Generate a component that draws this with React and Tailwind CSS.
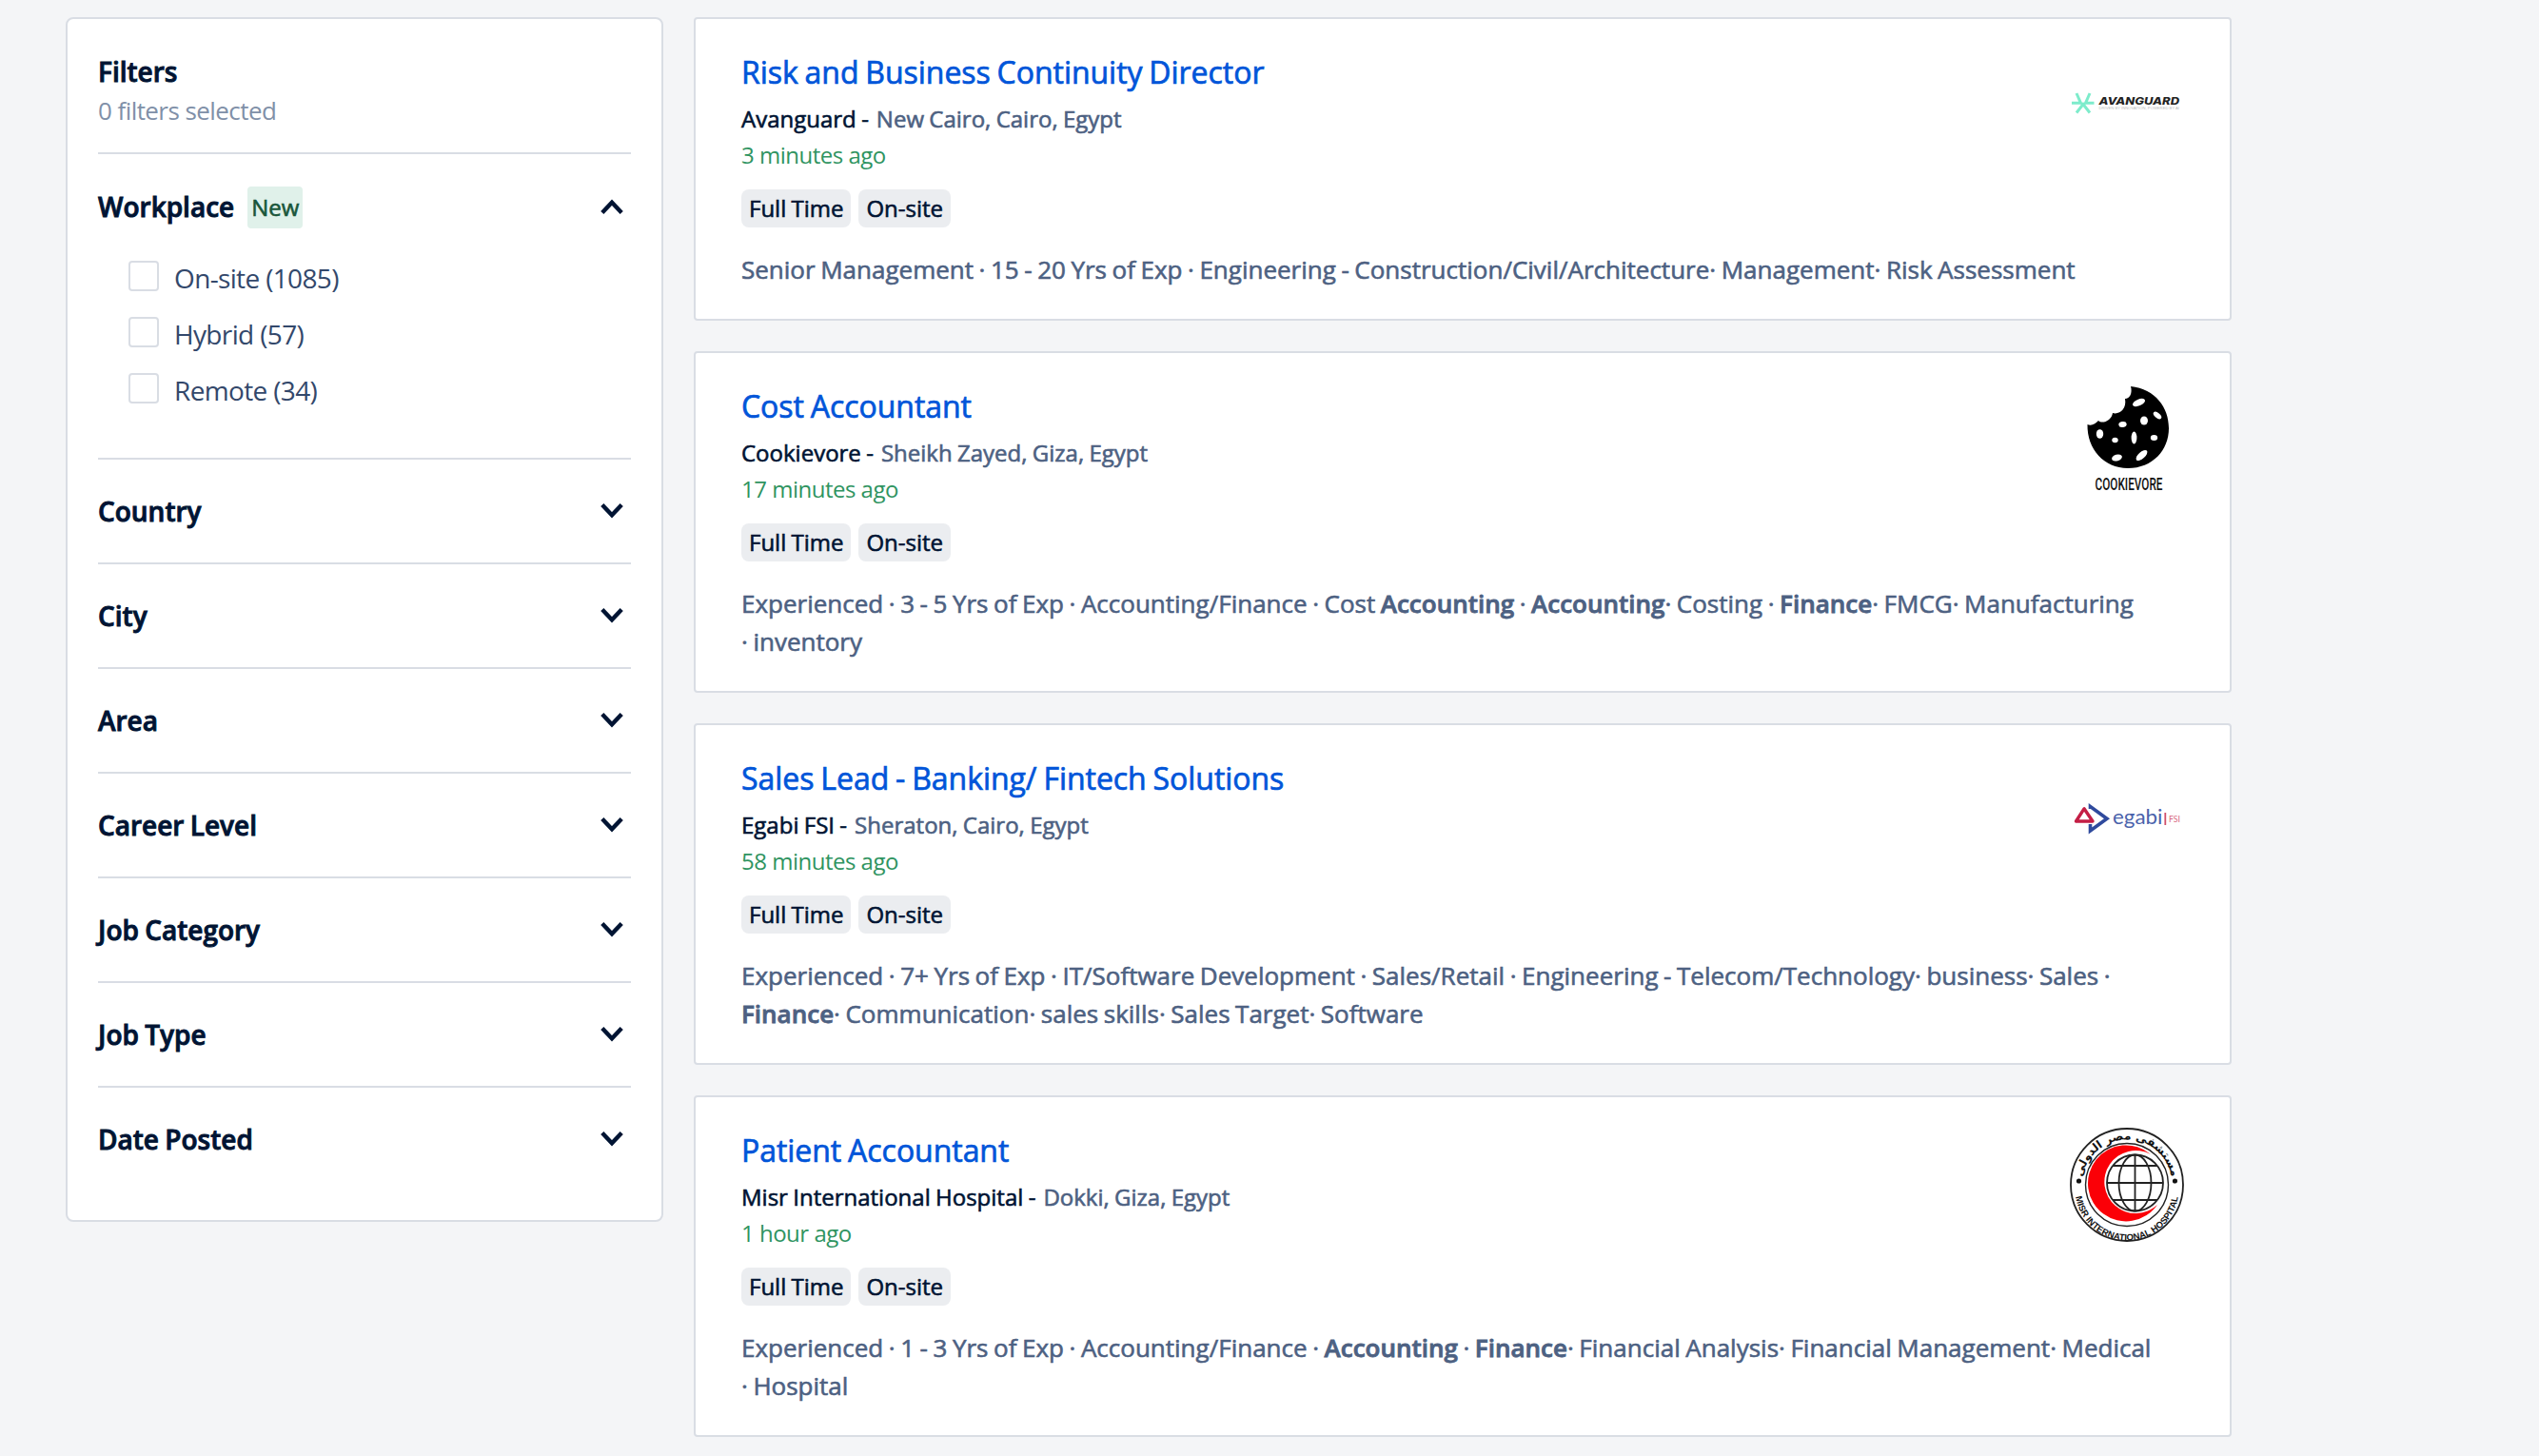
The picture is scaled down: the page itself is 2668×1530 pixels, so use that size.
import React from "react";

const filters = ["Country", "City", "Area", "Career Level", "Job Category", "Job Type", "Date Posted"];
const workplaces = ["On-site (1085)", "Hybrid (57)", "Remote (34)"];

function Chevron({ up }) {
  return (
    <svg width="24" height="20" viewBox="0 0 24 20" fill="none" stroke="#001433" strokeWidth="4.4">
      <path d={up ? "M1.8 15.500 L12 4.700 L22.2 15.500" : "M1.8 3.500 L12 14.300 L22.2 3.500"} />
    </svg>
  );
}

function AvanguardLogo() {
  return (
    <svg width="120" height="120" viewBox="0 0 120 120">
      <g stroke="#7deccb" strokeWidth="3" fill="none">
        <path d="M2 56.300H11.5L7 46M25.500 56.300H16.500L21 46M7 66.500L14 57.500L21 66.500" />
      </g>
      <text x="30.500" y="57.500" fontFamily="Inter" fontWeight="800" fontStyle="italic" fontSize="10.500" textLength="84.500" lengthAdjust="spacingAndGlyphs" fill="#222">AVANGUARD</text>
      <text x="30.500" y="63" fontFamily="Liberation Sans" fontSize="3.800" textLength="84.500" lengthAdjust="spacingAndGlyphs" fill="#bbb">DRIVEN BY INNOVATION, POWERED BY AI</text>
    </svg>
  );
}

function CookievoreLogo() {
  return (
    <svg className="overflow-visible" width="120" height="120" viewBox="-10 -3 120 120">
      <path d="M54 0C80 3 94 22 94 44C94 67 77 86 51 86C26 86 8 66 8.500 40C13 42 17 39 20 36C24 40 34 36 35 28C42 30 50 24 48 13C53 13 56 7 54 0Z" fill="#000" />
      <g fill="#fff">
        <ellipse cx="62.500" cy="17" rx="7" ry="3.400" transform="rotate(-24 62.500 17)" />
        <ellipse cx="82" cy="30.500" rx="5" ry="2.700" transform="rotate(40 82 30.500)" />
        <ellipse cx="68" cy="36" rx="4" ry="4.600" />
        <ellipse cx="45.500" cy="40" rx="4.200" ry="3" transform="rotate(-10 45.500 40)" />
        <ellipse cx="21.500" cy="50" rx="3.700" ry="4.800" />
        <ellipse cx="37.500" cy="56.500" rx="3.200" ry="2.700" />
        <ellipse cx="57.500" cy="54" rx="2.900" ry="6.500" />
        <ellipse cx="78.500" cy="54" rx="3.700" ry="2.900" />
        <ellipse cx="39.500" cy="75" rx="5.500" ry="3.400" transform="rotate(-15 39.500 75)" />
        <ellipse cx="65.500" cy="72.500" rx="7.300" ry="3.500" transform="rotate(-42 65.500 72.500)" />
      </g>
      <text x="16.500" y="109" fontFamily="Roboto" fontWeight="500" fontSize="18.500" textLength="71" lengthAdjust="spacingAndGlyphs" fill="#111">COOKIEVORE</text>
    </svg>
  );
}

function EgabiLogo() {
  return (
    <svg width="120" height="120" viewBox="0 0 120 120" fill="none">
      <path d="M21.500 56V53.500L39 66.300L21.500 79V72" stroke="#2f4a9d" strokeWidth="3.600" />
      <path d="M15 55.800L6.500 69H24Z" stroke="#c41e45" strokeWidth="3.400" strokeLinejoin="round" />
      <text x="45" y="71.500" fontFamily="Lato" fontSize="21" textLength="52.500" lengthAdjust="spacingAndGlyphs" fill="#4a62ab">egabi</text>
      <path d="M100.300 60V73" stroke="#d0506a" strokeWidth="1.800" />
      <text x="104" y="69.500" fontFamily="Lato" fontSize="8.500" textLength="12" lengthAdjust="spacingAndGlyphs" fill="#d86a80">FSI</text>
    </svg>
  );
}

function HospitalLogo() {
  return (
    <svg width="120" height="120" viewBox="0 0 120 120" fill="none">
      <circle cx="60" cy="60" r="59" stroke="#222" strokeWidth="1.800" />
      <circle cx="60" cy="60" r="43.500" stroke="#222" strokeWidth="1.400" />
      <path d="M92 81A40 40 0 1 1 85 28A33 33 0 1 0 92 81Z" fill="#fb0007" />
      <g stroke="#222" strokeWidth="1.800">
        <circle cx="68.500" cy="58" r="29.500" />
        <ellipse cx="68.500" cy="58" rx="17" ry="29.500" />
        <path d="M39 58H98M68.500 28.500V87.500M45 40H92M45 76H92" />
      </g>
      <g fill="#111">
        <circle cx="9.500" cy="56" r="2.600" /><circle cx="110.500" cy="56" r="2.600" />
      </g>
      <path id="hospital-top" d="M12.500 60A47.500 47.500 0 0 1 107.500 60" />
      <path id="hospital-bottom" d="M5.500 64A54.500 54.500 0 0 0 114.500 64" />
      <text fontFamily="DejaVu Sans" fontWeight="700" fontSize="12" fill="#111" direction="rtl" textAnchor="middle">
        <textPath href="#hospital-top" startOffset="50%">مستشفى مصر الدولى</textPath>
      </text>
      <text fontFamily="Liberation Sans" fontWeight="700" fontSize="9.500" fill="#111" textAnchor="middle">
        <textPath href="#hospital-bottom" startOffset="50%">MISR INTERNATIONAL HOSPITAL</textPath>
      </text>
    </svg>
  );
}

const B = ({ children }) => <b className="font-semibold [-webkit-text-stroke:0.8px_currentColor]">{children}</b>;

const jobs = [
  {
    title: "Risk and Business Continuity Director", company: "Avanguard", place: "New Cairo, Cairo, Egypt", time: "3 minutes ago", Logo: AvanguardLogo,
    lines: [<>Senior Management · 15 - 20 Yrs of Exp · Engineering - Construction/Civil/Architecture· Management· Risk Assessment</>],
  },
  {
    title: "Cost Accountant", company: "Cookievore", place: "Sheikh Zayed, Giza, Egypt", time: "17 minutes ago", Logo: CookievoreLogo,
    lines: [<>Experienced · 3 - 5 Yrs of Exp · Accounting/Finance · Cost <B>Accounting</B> · <B>Accounting</B>· Costing · <B>Finance</B>· FMCG· Manufacturing</>, <>· inventory</>],
  },
  {
    title: "Sales Lead - Banking/ Fintech Solutions", company: "Egabi FSI", place: "Sheraton, Cairo, Egypt", time: "58 minutes ago", Logo: EgabiLogo,
    lines: [<>Experienced · 7+ Yrs of Exp · IT/Software Development · Sales/Retail · Engineering - Telecom/Technology· business· Sales ·</>, <><B>Finance</B>· Communication· sales skills· Sales Target· Software</>],
  },
  {
    title: "Patient Accountant", company: "Misr International Hospital", place: "Dokki, Giza, Egypt", time: "1 hour ago", Logo: HospitalLogo,
    lines: [<>Experienced · 1 - 3 Yrs of Exp · Accounting/Finance · <B>Accounting</B> · <B>Finance</B>· Financial Analysis· Financial Management· Medical</>, <>· Hospital</>],
  },
];

function Job({ job }) {
  const { Logo } = job;
  return (
    <article className="flex justify-between rounded-[4px] border-2 border-[#d9dde4] bg-white px-[48px] py-[30px]">
      <div className="flex w-0 flex-col items-start whitespace-nowrap">
        <h2 className="text-[32px] leading-[52px] tracking-[-0.04px] [word-spacing:-1.4px] [-webkit-text-stroke:0.7px_currentColor] text-[#0055d9]">{job.title}</h2>
        <p className="mt-[4px] text-[24px] leading-[38px] [word-spacing:-0.9px] [-webkit-text-stroke:0.6px_currentColor] text-[#4d6182]">
          <span className="text-[#001433]">{job.company} -</span>
          <span className="ml-2">{job.place}</span>
        </p>
        <p className="text-[24px] leading-[38px] tracking-[-0.5px] text-[#2f9461]">{job.time}</p>
        <div className="mt-[17px] flex gap-2 text-[24px] leading-[40px] [word-spacing:-1px] [-webkit-text-stroke:0.6px_currentColor] text-[#001433]">
          <span className="rounded-[8px] bg-[#ebedf0] px-2">Full Time</span>
          <span className="rounded-[8px] bg-[#ebedf0] px-2">On-site</span>
        </div>
        <div className="mt-[24px] mb-[2px] text-[26px] leading-[40px] [word-spacing:-1.2px] [-webkit-text-stroke:0.6px_currentColor] text-[#4d6182]">
          {job.lines.map((line, i) => <p key={i}>{line}</p>)}
        </div>
      </div>
      <div className="mt-[2px] size-[120px] shrink-0">
        <Logo />
      </div>
    </article>
  );
}

export default function App() {
  return (
    <div className="flex h-[1530px] w-[2668px] items-start gap-[32px] overflow-hidden bg-[#f4f5f7] pt-[18px] pl-[69px] font-['Open_Sans',sans-serif]">
      <aside className="h-[1266px] w-[628px] shrink-0 rounded-[8px] border-2 border-[#d9dde4] bg-white px-[32px]">
        <div className="h-[140px] pt-[34px]">
          <h1 className="text-[28px] leading-[42px] font-semibold [-webkit-text-stroke:0.9px_currentColor] text-[#001433]">Filters</h1>
          <p className="text-[26px] leading-[40px] tracking-[-0.57px] text-[#8090a8]">0 filters selected</p>
        </div>
        <section className="h-[321px] border-t-2 border-[#d9dde4] pt-[34px]">
          <div className="flex h-[44px] items-center pr-[8px]">
            <h2 className="-mt-[2px] text-[28px] leading-[40px] font-semibold [-webkit-text-stroke:0.9px_currentColor] text-[#001433]">Workplace</h2>
            <span className="ml-[14px] rounded-[4px] bg-[#e0f1ea] px-1 text-[24px] leading-[44px] [-webkit-text-stroke:0.6px_currentColor] text-[#19563a]">New</span>
            <span className="ml-auto"><Chevron up /></span>
          </div>
          <div className="mt-[30px] ml-[32px] flex flex-col">
            {workplaces.map((w) => (
              <label key={w} className="flex h-[59px] items-start gap-[16px] text-[28px] leading-[45px] tracking-[-0.65px] text-[#33486b]">
                <span className="mt-[4px] size-[32px] rounded-[4px] border-2 border-[#d9dde4]" />
                {w}
              </label>
            ))}
          </div>
        </section>
        {filters.map((f) => (
          <div key={f} className="flex h-[110px] items-center justify-between border-t-2 border-[#d9dde4] pr-[8px]">
            <h2 className="text-[28px] font-semibold [word-spacing:-1px] [-webkit-text-stroke:0.9px_currentColor] text-[#001433]">{f}</h2>
            <Chevron />
          </div>
        ))}
      </aside>
      <main className="flex w-[1616px] shrink-0 flex-col gap-[32px]">
        {jobs.map((job) => <Job key={job.title} job={job} />)}
      </main>
    </div>
  );
}
